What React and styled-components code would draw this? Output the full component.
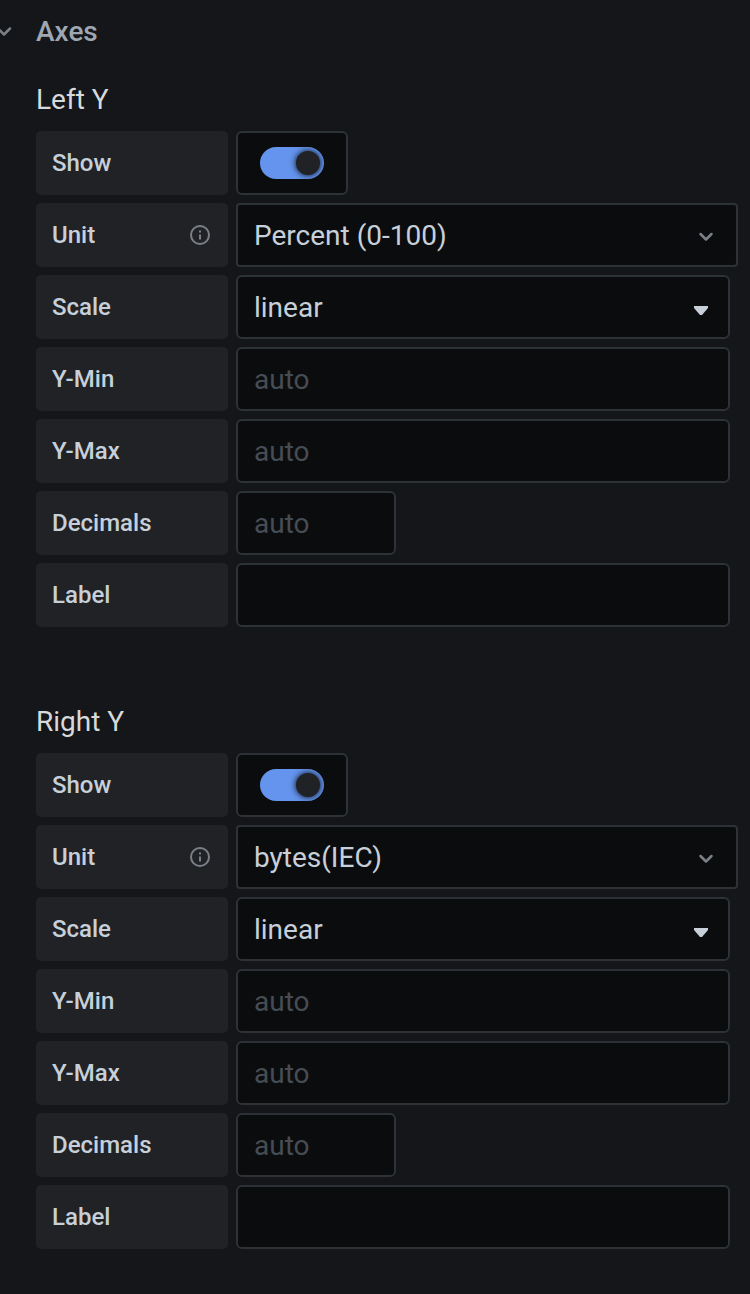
import React, { useId, useState } from "react";
import styled, { createGlobalStyle } from "styled-components";

const GlobalStyle = createGlobalStyle`
  *, *::before, *::after { box-sizing: border-box; }
  body {
    margin: 0;
    background: #141619;
    color: #c7d0d9;
    font-family: Roboto, "Liberation Sans", sans-serif;
  }
`;

const Panel = styled.section`
  padding-bottom: 44px;
`;

const Heading = styled.h2`
  margin: 0;
  font: inherit;
`;

const HeaderButton = styled.button`
  display: flex;
  align-items: center;
  width: 100%;
  height: 64px;
  padding: 0;
  border: 0;
  background: none;
  color: #9fa7b3;
  font-family: inherit;
  font-size: 28px;
  font-weight: 500;
  line-height: 32px;
  text-align: left;
  cursor: pointer;
`;

const HeaderIcon = styled.svg`
  width: 36px;
  height: 24px;
`;

const Group = styled.fieldset`
  min-width: 0;
  margin: 0;
  padding: 0 12px 0 36px;
  border: 0;

  & + & {
    margin-top: 59px;
  }
`;

const GroupTitle = styled.legend`
  padding: 20px 0 15px;
  color: #d8d9da;
  font-size: 28px;
  line-height: 32px;
`;

const Rows = styled.div`
  display: grid;
  gap: 8px;
`;

const Row = styled.div`
  display: flex;
  gap: 8px;
  padding-right: ${(p) => (p.$wide ? "0" : "8px")};
`;

const LabelBox = styled.div`
  display: flex;
  flex: none;
  align-items: center;
  justify-content: space-between;
  width: 192px;
  height: 64px;
  padding: 0 16px;
  border-radius: 5px;
  background: #202226;
`;

const LabelText = styled.label`
  font-size: 24px;
  font-weight: 500;
  line-height: 32px;
`;

const InfoIcon = styled.svg`
  width: 24px;
  height: 24px;
`;

const TextField = styled.input`
  flex: ${(p) => (p.$short ? "0 0 160px" : "1")};
  min-width: 0;
  height: 64px;
  padding: 0 16px;
  border: 2px solid #2c3235;
  border-radius: 6px;
  background: #0b0c0e;
  color: #c7d0d9;
  font-family: inherit;
  font-size: 28px;
  line-height: 32px;

  &::placeholder {
    color: #464c54;
    opacity: 1;
  }
`;

const SelectBox = styled.div`
  display: grid;
  flex: 1;
  align-items: center;
  min-width: 0;
`;

const SelectField = styled.select`
  grid-area: 1 / 1;
  width: 100%;
  height: 64px;
  padding: 2px 56px 0 16px;
  border: 2px solid #2c3235;
  border-radius: ${(p) => (p.$sharp ? "4px" : "6px")};
  background: #0b0c0e;
  color: #c7d0d9;
  font-family: inherit;
  font-size: 28px;
  line-height: 32px;
  appearance: none;
`;

const SelectIcon = styled.svg`
  grid-area: 1 / 1;
  justify-self: end;
  width: 24px;
  height: 24px;
  margin-right: 20px;
  pointer-events: none;
`;

const SwitchBox = styled.div`
  display: flex;
  align-items: center;
  justify-content: center;
  width: 112px;
  height: 64px;
  border: 2px solid #2c3235;
  border-radius: 6px;
  background: #0b0c0e;
`;

const Switch = styled.input`
  width: 64px;
  height: 32px;
  margin: 0;
  padding: 4px;
  overflow: hidden;
  border-radius: 16px;
  background: #343b40;
  appearance: none;
  cursor: pointer;

  &::before {
    content: "";
    display: block;
    width: 24px;
    height: 24px;
    border-radius: 50%;
    background: #202226;
    box-shadow: 0 0 6px #000000;
  }

  &:checked {
    background: #6494ed;
  }

  &:checked::before {
    margin-left: 32px;
  }
`;

function Field({ id, label, info, wide, children }) {
  return (
    <Row $wide={wide}>
      <LabelBox>
        <LabelText htmlFor={id}>{label}</LabelText>
        {info && (
          <InfoIcon viewBox="0 0 24 24" fill="none" stroke="#7b8087" aria-hidden="true">
            <circle cx="12" cy="12" r="9" strokeWidth="2" />
            <path d="M12 11.5v5" strokeWidth="2" />
            <path d="M12 7.5v2" strokeWidth="2" />
          </InfoIcon>
        )}
      </LabelBox>
      {children}
    </Row>
  );
}

function Axis({ title, unit, units }) {
  const id = useId();
  return (
    <Group>
      <GroupTitle>{title}</GroupTitle>
      <Rows>
        <Field id={`${id}-show`} label="Show">
          <SwitchBox>
            <Switch id={`${id}-show`} type="checkbox" role="switch" defaultChecked />
          </SwitchBox>
        </Field>
        <Field id={`${id}-unit`} label="Unit" info wide>
          <SelectBox>
            <SelectField id={`${id}-unit`} defaultValue={unit} $sharp>
              {units.map((u) => (
                <option key={u}>{u}</option>
              ))}
            </SelectField>
            <SelectIcon viewBox="0 0 24 24" fill="none" stroke="#7b8087" aria-hidden="true">
              <path d="M6.5 11l5.5 5.5 5.5-5.5" strokeWidth="2.5" strokeLinecap="round" strokeLinejoin="round" />
            </SelectIcon>
          </SelectBox>
        </Field>
        <Field id={`${id}-scale`} label="Scale">
          <SelectBox>
            <SelectField id={`${id}-scale`} defaultValue="linear">
              <option>linear</option>
            </SelectField>
            <SelectIcon viewBox="0 0 24 24" fill="#c7d0d9" aria-hidden="true">
              <path d="M8 11h14v2l-6 7h-2l-6-7z" />
            </SelectIcon>
          </SelectBox>
        </Field>
        <Field id={`${id}-min`} label="Y-Min">
          <TextField id={`${id}-min`} type="text" placeholder="auto" />
        </Field>
        <Field id={`${id}-max`} label="Y-Max">
          <TextField id={`${id}-max`} type="text" placeholder="auto" />
        </Field>
        <Field id={`${id}-decimals`} label="Decimals">
          <TextField id={`${id}-decimals`} type="text" placeholder="auto" $short />
        </Field>
        <Field id={`${id}-label`} label="Label">
          <TextField id={`${id}-label`} type="text" />
        </Field>
      </Rows>
    </Group>
  );
}

const UNITS = ["Percent (0-100)", "bytes(IEC)"];

export default function App() {
  const [open, setOpen] = useState(true);
  return (
    <>
      <GlobalStyle />
      <Panel>
        <Heading>
          <HeaderButton type="button" aria-expanded={open} onClick={() => setOpen(!open)}>
            <HeaderIcon viewBox="0 0 36 24" fill="none" stroke="#7b8087" aria-hidden="true">
              <path d="M-2 8.5l6 6 6-6" strokeWidth="2.5" strokeLinecap="round" strokeLinejoin="round" />
            </HeaderIcon>
            Axes
          </HeaderButton>
        </Heading>
        {open && (
          <>
            <Axis title="Left Y" unit="Percent (0-100)" units={UNITS} />
            <Axis title="Right Y" unit="bytes(IEC)" units={UNITS} />
          </>
        )}
      </Panel>
    </>
  );
}
